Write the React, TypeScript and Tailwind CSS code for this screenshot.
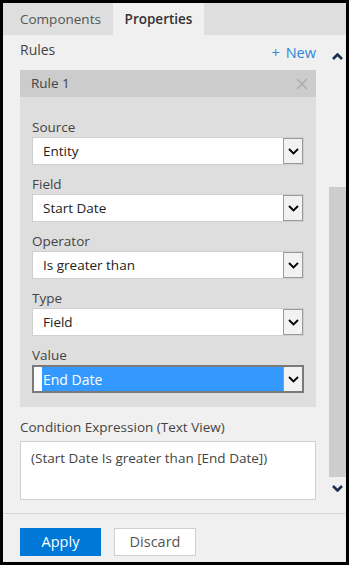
import React from "react";

const font = { fontFamily: '"Open Sans", "Noto Sans", sans-serif' };

function Chevron({ className = "" }: { className?: string }) {
  return (
    <svg width="11" height="7" viewBox="0 0 11 7" className={className}>
      <path d="M1 1 L5.5 5.5 L10 1" fill="none" stroke="currentColor" strokeWidth="1.8" />
    </svg>
  );
}

function Select({ value, active = false }: { value: string; active?: boolean }) {
  if (active) {
    return (
      <div className="flex h-[28px] border-2 border-[#7a7a7a] bg-white">
        <div className="w-[8px] bg-white" />
        <div className="flex flex-1 items-center bg-[#3399ff] pl-[1px] text-[14px] text-white">{value}</div>
        <div className="flex w-[19px] items-center justify-center border-l border-[#9a9a9a] bg-[#f2f2f2] text-black">
          <Chevron />
        </div>
      </div>
    );
  }
  return (
    <div className="flex h-[28px] border border-[#cfcfcf] bg-white">
      <div className="flex flex-1 items-center pl-[10px] text-[13.5px] text-[#222]">{value}</div>
      <div className="flex w-[20px] items-center justify-center border border-[#9a9a9a] bg-[#f2f2f2] text-black">
        <Chevron />
      </div>
    </div>
  );
}

function Field({ label, value, active }: { label: string; value: string; active?: boolean }) {
  return (
    <div className="flex flex-col">
      <div className="h-[20px] text-[13.5px] leading-[20px] text-[#444]">{label}</div>
      <Select value={value} active={active} />
    </div>
  );
}

export default function App() {
  return (
    <div className="h-[570px] w-[352px] bg-white" style={font}>
      <div className="flex h-[565px] w-[349px] flex-col border-[3px] border-black bg-[#f0f0f0]">
        {/* tabs */}
        <div className="flex h-[32px] shrink-0 bg-[#dedede]">
          <div className="flex w-[110px] items-center pl-[17px] text-[13.5px] text-[#555]">Components</div>
          <div className="flex w-[91px] items-center justify-center bg-[#f0f0f0] text-[13.5px] font-semibold text-[#333]">
            Properties
          </div>
        </div>
        {/* body */}
        <div className="flex h-[478px] shrink-0">
          <div className="flex flex-1 flex-col pl-[17px] pr-[13px]">
            <div className="flex h-[35px] items-start justify-between pt-[5px]">
              <span className="text-[14px] leading-[20px] text-[#444]">Rules</span>
              <span className="mt-[3px] text-[14.5px] leading-[20px] text-[#2b88d8]">
                <span className="mr-[6px]">+</span>New
              </span>
            </div>
            <div className="flex flex-col">
              <div className="flex h-[27px] items-center justify-between bg-[#cccccc] pl-[11px] pr-[8px]">
                <span className="text-[13.5px] text-[#444]">Rule 1</span>
                <svg width="12" height="12" viewBox="0 0 12 12">
                  <path d="M1 1 L11 11 M11 1 L1 11" stroke="#a8a8a8" strokeWidth="1.2" />
                </svg>
              </div>
              <div className="flex flex-col gap-[9px] bg-[#dedede] px-[12px] pb-[14px] pt-[20px]">
                <Field label="Source" value="Entity" />
                <Field label="Field" value="Start Date" />
                <Field label="Operator" value="Is greater than" />
                <Field label="Type" value="Field" />
                <Field label="Value" value="End Date" active />
              </div>
            </div>
            <div className="mt-[10px] h-[24px] text-[13.5px] leading-[20px] text-[#444]">Condition Expression (Text View)</div>
            <div className="h-[59px] border border-[#cfcfcf] bg-white pl-[10px] pt-[6px] text-[13.5px] text-[#444]">
              (Start Date Is greater than [End Date])
            </div>
          </div>
          {/* scrollbar */}
          <div className="flex w-[17px] flex-col items-center">
            <div className="mt-[18px] h-[10px] text-[#1b2f4f]">
              <svg width="11" height="7" viewBox="0 0 11 7">
                <path d="M1 6 L5.5 1.5 L10 6" fill="none" stroke="currentColor" strokeWidth="2.6" />
              </svg>
            </div>
            <div className="mt-[124px] h-[290px] w-[17px] bg-[#cdcdcd]" />
            <div className="mt-[8px] text-[#1b2f4f]">
              <svg width="11" height="7" viewBox="0 0 11 7">
                <path d="M1 1 L5.5 5.5 L10 1" fill="none" stroke="currentColor" strokeWidth="2.6" />
              </svg>
            </div>
          </div>
        </div>
        {/* footer */}
        <div className="flex flex-1 items-start gap-[13px] border-t border-[#d6d6d6] pl-[17px] pt-[14px]">
          <div className="flex h-[28px] w-[81px] items-center justify-center bg-[#0078d7] text-[14.5px] text-white">Apply</div>
          <div className="flex h-[28px] w-[82px] items-center justify-center border border-[#cfcfcf] bg-white text-[14.5px] text-[#555]">
            Discard
          </div>
        </div>
      </div>
    </div>
  );
}
